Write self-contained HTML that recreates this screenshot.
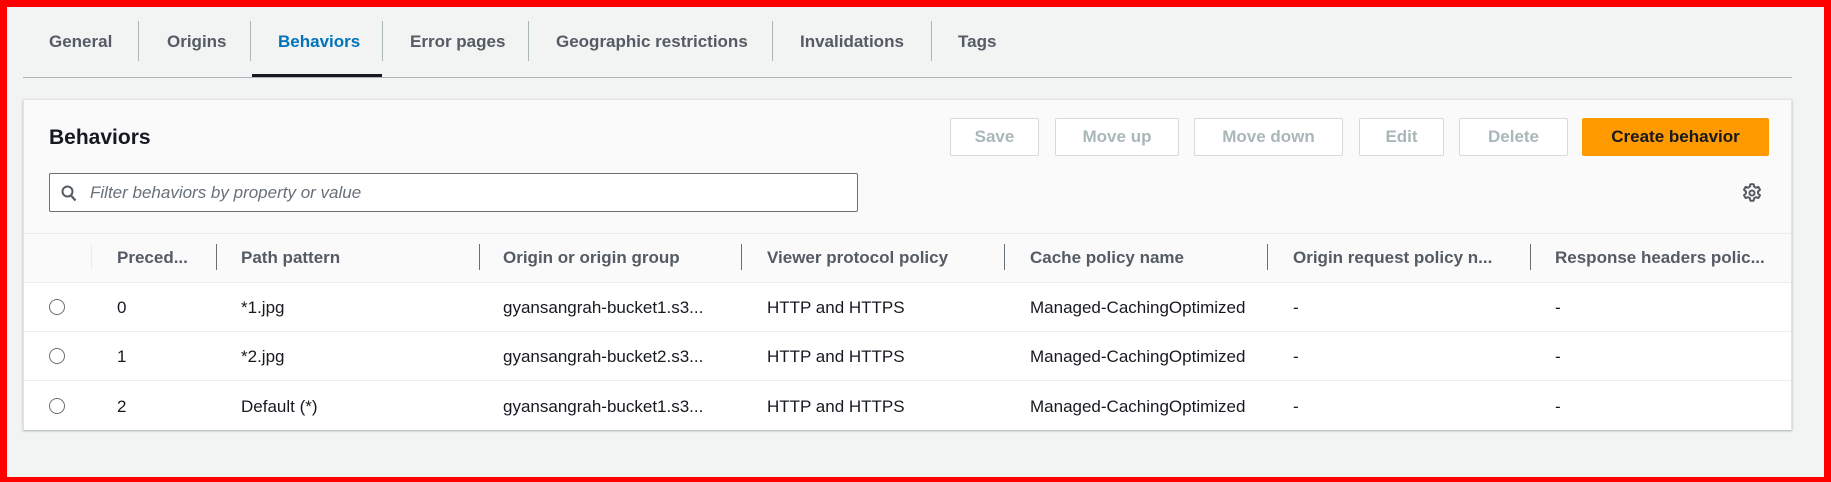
<!DOCTYPE html>
<html><head><meta charset="utf-8"><style>
*{box-sizing:border-box;margin:0;padding:0}
body{width:1831px;height:482px;overflow:hidden;background:#f2f3f3;font-family:"Liberation Sans",sans-serif;color:#16191f;position:relative}
.frame{position:absolute;left:0;top:0;width:1831px;height:482px;border:7px solid #ff0000;border-bottom-width:5px;pointer-events:none;z-index:10}
.tab{position:absolute;top:32px;font-size:17px;font-weight:bold;color:#545b64;white-space:nowrap}
.sep{position:absolute;top:21px;height:40px;width:1px;background:#aab7b8}
.panel{position:absolute;left:23px;top:99px;width:1769px;height:331px;background:#fafafa;border:1px solid #e1e4e4;box-shadow:0 1px 2px rgba(0,28,36,.3)}
.btn{position:absolute;top:18px;height:38px;border:1px solid #d5dbdb;background:#fff;color:#aab7b8;font-weight:bold;font-size:17px;display:flex;align-items:center;justify-content:center;border-radius:2px}
.row{position:absolute;left:0;width:100%;background:#fff;border-top:1px solid #eaeded;height:50px}
.c{position:absolute;font-size:17px;white-space:nowrap}
.h{position:absolute;font-size:17px;font-weight:bold;color:#545b64;white-space:nowrap;top:14px}
.hs{position:absolute;top:10px;height:26px;width:1px;background:#687078}
.radio{position:absolute;left:25px;width:16px;height:16px;border:1px solid #687078;border-radius:50%;background:#fff}
</style></head><body>
<div class="tab" style="left:49px">General</div>
<div class="sep" style="left:138px"></div>
<div class="tab" style="left:167px">Origins</div>
<div class="sep" style="left:250px"></div>
<div class="tab" style="left:278px;color:#0073bb">Behaviors</div>
<div class="sep" style="left:382px"></div>
<div class="tab" style="left:410px">Error pages</div>
<div class="sep" style="left:528px"></div>
<div class="tab" style="left:556px">Geographic restrictions</div>
<div class="sep" style="left:772px"></div>
<div class="tab" style="left:800px">Invalidations</div>
<div class="sep" style="left:931px"></div>
<div class="tab" style="left:958px">Tags</div>
<div style="position:absolute;left:23px;top:77px;width:1769px;height:1px;background:#aab7b8"></div>
<div style="position:absolute;left:252px;top:74px;width:130px;height:3px;background:#16191f"></div>

<div class="panel">
 <div style="position:absolute;left:25px;top:26px;font-size:21px;font-weight:bold">Behaviors</div>
 <div class="btn" style="left:926px;width:89px">Save</div>
 <div class="btn" style="left:1031px;width:124px">Move up</div>
 <div class="btn" style="left:1170px;width:149px">Move down</div>
 <div class="btn" style="left:1335px;width:85px">Edit</div>
 <div class="btn" style="left:1435px;width:109px">Delete</div>
 <div class="btn" style="left:1558px;width:187px;background:#ff9900;border-color:#ff9900;color:#16191f">Create behavior</div>
 <div style="position:absolute;left:25px;top:73px;width:809px;height:39px;background:#fff;border:1px solid #687078;border-radius:2px">
  <svg style="position:absolute;left:11px;top:11px" width="16" height="17" viewBox="0 0 16 17"><circle cx="6.5" cy="6.5" r="5" fill="none" stroke="#545b64" stroke-width="2"/><path d="M10 10.5L14.5 15.5" stroke="#545b64" stroke-width="2.2"/></svg>
  <span style="position:absolute;left:40px;top:9px;font-size:17px;font-style:italic;color:#687078">Filter behaviors by property or value</span>
 </div>
 <svg style="position:absolute;left:1717px;top:82px" width="22" height="22" viewBox="0 0 20 20"><path d="M8.5 2h3l.5 2.3 1.6.9 2.2-.8 1.5 2.6-1.8 1.6v1.8l1.8 1.6-1.5 2.6-2.2-.8-1.6.9-.5 2.3h-3l-.5-2.3-1.6-.9-2.2.8-1.5-2.6 1.8-1.6V8.6L2.7 7l1.5-2.6 2.2.8L8 4.3z" fill="none" stroke="#545b64" stroke-width="1.8" stroke-linejoin="round"/><circle cx="10" cy="10" r="2.3" fill="none" stroke="#545b64" stroke-width="1.8"/></svg>
 <div style="position:absolute;left:0;top:133px;width:100%;height:1px;background:#eaeded"></div>
 <div style="position:absolute;left:0;top:134px;width:100%;height:48px">
  <div class="hs" style="left:67px;background:#eaeded"></div>
  <div class="h" style="left:93px">Preced...</div><div class="hs" style="left:192px"></div>
  <div class="h" style="left:217px">Path pattern</div><div class="hs" style="left:455px"></div>
  <div class="h" style="left:479px">Origin or origin group</div><div class="hs" style="left:717px"></div>
  <div class="h" style="left:743px">Viewer protocol policy</div><div class="hs" style="left:980px"></div>
  <div class="h" style="left:1006px">Cache policy name</div><div class="hs" style="left:1243px"></div>
  <div class="h" style="left:1269px">Origin request policy n...</div><div class="hs" style="left:1506px"></div>
  <div class="h" style="left:1531px">Response headers polic...</div>
 </div>
 <div class="row" style="top:182px"><div class="radio" style="top:16px"></div><div class="c" style="left:93px;top:15px">0</div><div class="c" style="left:217px;top:15px">*1.jpg</div><div class="c" style="left:479px;top:15px">gyansangrah-bucket1.s3...</div><div class="c" style="left:743px;top:15px">HTTP and HTTPS</div><div class="c" style="left:1006px;top:15px">Managed-CachingOptimized</div><div class="c" style="left:1269px;top:15px">-</div><div class="c" style="left:1531px;top:15px">-</div></div>
 <div class="row" style="top:231px"><div class="radio" style="top:16px"></div><div class="c" style="left:93px;top:15px">1</div><div class="c" style="left:217px;top:15px">*2.jpg</div><div class="c" style="left:479px;top:15px">gyansangrah-bucket2.s3...</div><div class="c" style="left:743px;top:15px">HTTP and HTTPS</div><div class="c" style="left:1006px;top:15px">Managed-CachingOptimized</div><div class="c" style="left:1269px;top:15px">-</div><div class="c" style="left:1531px;top:15px">-</div></div>
 <div class="row" style="top:280px;height:50px"><div class="radio" style="top:17px"></div><div class="c" style="left:93px;top:16px">2</div><div class="c" style="left:217px;top:16px">Default (*)</div><div class="c" style="left:479px;top:16px">gyansangrah-bucket1.s3...</div><div class="c" style="left:743px;top:16px">HTTP and HTTPS</div><div class="c" style="left:1006px;top:16px">Managed-CachingOptimized</div><div class="c" style="left:1269px;top:16px">-</div><div class="c" style="left:1531px;top:16px">-</div></div>
</div>
<div class="frame"></div>
</body></html>
